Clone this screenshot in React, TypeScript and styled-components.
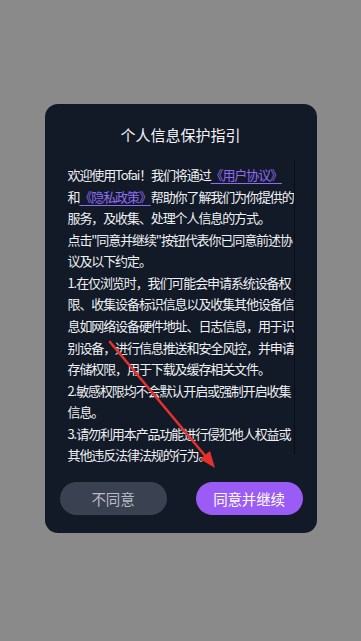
import React from 'react'
import styled, { createGlobalStyle } from 'styled-components'

const GlobalStyle = createGlobalStyle`
  html, body {
    margin: 0;
    padding: 0;
    height: 100%;
  }
  body {
    font-family: "Noto Sans CJK SC", "Noto Sans", sans-serif;
    background: #8a8a8a;
  }
`

export const Overlay = styled.div`
  position: relative;
  width: 100vw;
  height: 100vh;
  background: #8a8a8a;
  display: flex;
  align-items: center;
  justify-content: center;
  padding-bottom: 4px;
  box-sizing: border-box;
  overflow: hidden;
`

export const Dialog = styled.div`
  width: 272px;
  background: #121927;
  border-radius: 13px;
  padding: 20px 0 18px;
  box-sizing: border-box;
  display: flex;
  flex-direction: column;
  align-items: center;
`

export const Titulo = styled.h2`
  margin: 0;
  font-size: 15px;
  line-height: 22px;
  font-weight: 400;
  color: #f2f3f5;
`

export const Conteudo = styled.div`
  position: relative;
  width: 228px;
  margin: 18px 0 0 2px;
  font-size: 13px;
  letter-spacing: -1.1px;
  line-height: 21.55px;
  color: #eef0f3;

  &::after {
    content: '';
    position: absolute;
    right: 1px;
    top: -4px;
    bottom: 11px;
    width: 1px;
    background: #080c15;
  }
`

export const Paragrafo = styled.p`
  margin: 0;
`

export const Link = styled.a`
  color: #8f6df2;
  text-decoration: underline;
  text-decoration-thickness: 1px;
  text-underline-offset: 3px;
`

export const Botoes = styled.div`
  width: 100%;
  margin-top: 16px;
  padding: 0 14px 0 15px;
  box-sizing: border-box;
  display: flex;
  justify-content: space-between;
`

export const Botao = styled.button<{ $primario?: boolean }>`
  width: 107px;
  height: 33px;
  border: none;
  border-radius: 17px;
  font-family: inherit;
  font-size: 14.5px;
  letter-spacing: -0.2px;
  background: ${props => (props.$primario ? '#9b5cf6' : '#3a4150')};
  color: ${props => (props.$primario ? '#ffffff' : '#b7bcc6')};
  cursor: pointer;
`

export const Seta = styled.svg`
  position: absolute;
  left: 0;
  top: 0;
  pointer-events: none;
`

export default function App() {
  return (
    <>
      <GlobalStyle />
      <Overlay>
        <Dialog>
          <Titulo>个人信息保护指引</Titulo>
          <Conteudo>
            <Paragrafo>
              欢迎使用Tofai！我们将通过<Link>《用户协议》</Link>
              <br />
              和<Link>《隐私政策》</Link>帮助你了解我们为你提供的服务，及收集、处理个人信息的方式。
            </Paragrafo>
            <Paragrafo>点击"同意并继续"按钮代表你已同意前述协议及以下约定。</Paragrafo>
            <Paragrafo>
              1.在仅浏览时，我们可能会申请系统设备权限、收集设备标识信息以及收集其他设备信息如网络设备硬件地址、日志信息，用于识别设备，进行信息推送和安全风控，并申请存储权限，用于下载及缓存相关文件。
            </Paragrafo>
            <Paragrafo>2.敏感权限均不会默认开启或强制开启收集信息。</Paragrafo>
            <Paragrafo>3.请勿利用本产品功能进行侵犯他人权益或其他违反法律法规的行为。</Paragrafo>
          </Conteudo>
          <Botoes>
            <Botao>不同意</Botao>
            <Botao $primario>同意并继续</Botao>
          </Botoes>
        </Dialog>
        <Seta width="361" height="641" viewBox="0 0 361 641">
          <line x1="110" y1="342" x2="207" y2="458" stroke="#e6302b" strokeWidth="2.6" strokeLinecap="round" />
          <polygon points="215,468 200,459 210,451" fill="#e6302b" />
        </Seta>
      </Overlay>
    </>
  )
}
